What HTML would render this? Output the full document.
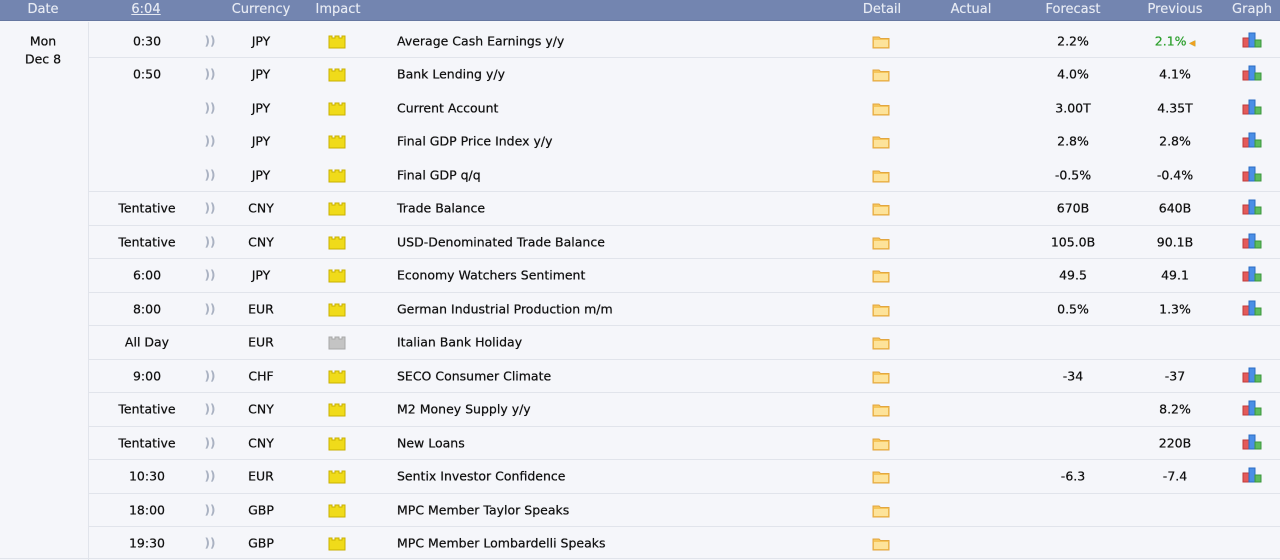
<!DOCTYPE html>
<html><head><meta charset="utf-8"><style>
*{margin:0;padding:0;box-sizing:border-box}
body{width:1280px;height:560px;overflow:hidden;background:#f5f6fa;font-family:"DejaVu Sans","Liberation Sans",sans-serif;font-size:12.5px;color:#111;position:relative}
.hdr{position:absolute;left:0;top:0;width:1280px;height:21px;background:#7385b0;border-bottom:1px solid #6677a0}
.h{position:absolute;top:2px;color:#e6eaf3;font-size:13px;transform:translateX(-50%);white-space:nowrap;text-shadow:0 0 0.4px #e6eaf3}
.vl{position:absolute;left:88px;top:22px;width:1px;height:538px;background:#e1e4eb}
.sep{position:absolute;left:89px;right:0;height:1px;background:#e1e4eb}
.t,.l{text-shadow:0 0 0.5px #111}
.t{position:absolute;transform:translate(-50%,-50%);white-space:nowrap}
.l{position:absolute;transform:translateY(-50%);white-space:nowrap}
.snd{position:absolute;color:#aab2c2;font-size:12px;font-weight:bold;transform:translate(-50%,-50%)}
</style></head><body>
<div class="hdr">
<span class="h" style="left:43px">Date</span>
<span class="h" style="left:146px;text-decoration:underline">6:04</span>
<span class="h" style="left:261px">Currency</span>
<span class="h" style="left:338px">Impact</span>
<span class="h" style="left:882px">Detail</span>
<span class="h" style="left:971px">Actual</span>
<span class="h" style="left:1073px">Forecast</span>
<span class="h" style="left:1175px">Previous</span>
<span class="h" style="left:1252px">Graph</span>
</div>
<div class="vl"></div>
<div class="t" style="left:43px;top:41px">Mon</div>
<div class="t" style="left:43px;top:59px">Dec 8</div>
<div class="sep" style="top:558px;left:0"></div>
<div id="rows"></div>
<script>
var R=[
["0:30","JPY",1,"Average Cash Earnings y/y","2.2%","2.1%",1,1],
["0:50","JPY",1,"Bank Lending y/y","4.0%","4.1%",0,0],
["","JPY",1,"Current Account","3.00T","4.35T",0,0],
["","JPY",1,"Final GDP Price Index y/y","2.8%","2.8%",0,0],
["","JPY",1,"Final GDP q/q","-0.5%","-0.4%",0,1],
["Tentative","CNY",1,"Trade Balance","670B","640B",0,1],
["Tentative","CNY",1,"USD-Denominated Trade Balance","105.0B","90.1B",0,1],
["6:00","JPY",1,"Economy Watchers Sentiment","49.5","49.1",0,1],
["8:00","EUR",1,"German Industrial Production m/m","0.5%","1.3%",0,1],
["All Day","EUR",0,"Italian Bank Holiday","","",0,1],
["9:00","CHF",1,"SECO Consumer Climate","-34","-37",0,1],
["Tentative","CNY",1,"M2 Money Supply y/y","","8.2%",0,1],
["Tentative","CNY",1,"New Loans","","220B",0,1],
["10:30","EUR",1,"Sentix Investor Confidence","-6.3","-7.4",0,1],
["18:00","GBP",1,"MPC Member Taylor Speaks","","",0,1],
["19:30","GBP",1,"MPC Member Lombardelli Speaks","","",0,0]];
var h="";
var folder='<svg width="18" height="14" viewBox="0 0 18 14"><path d="M1 2h6l1.5 1.5H17V13H1z" fill="#f6c65a" stroke="#e2a640"/><rect x="2" y="5" width="14" height="7" fill="#fde39a"/></svg>';
var graph='<svg width="20" height="16" viewBox="0 0 20 16"><rect x="1" y="6" width="6" height="9" fill="#e45a5a" stroke="#c03a3a"/><rect x="7" y="1" width="6" height="14" fill="#4a8ee6" stroke="#2b6cc4"/><rect x="13" y="8" width="6" height="7" fill="#5dbb5d" stroke="#3c963c"/></svg>';
function imp(c){var f=c?"#f0db1a":"#c4c4c4",s=c?"#c9b000":"#a8a8a8";return '<svg width="18" height="14" viewBox="0 0 18 14"><path d="M1 1h3v2h3V1h4v2h3V1h3v12H1z" fill="'+f+'" stroke="'+s+'"/></svg>';}
R.forEach(function(r,i){
var y=40.5+33.5*i;
h+='<div class="t" style="left:147px;top:'+y+'px">'+r[0]+'</div>';
if(r[0]!="All Day")h+='<div class="snd" style="left:210px;top:'+y+'px">))</div>';
h+='<div class="t" style="left:261px;top:'+y+'px">'+r[1]+'</div>';
h+='<div class="t" style="left:337px;top:'+(y+1)+'px;line-height:0;text-shadow:none">'+imp(r[2])+'</div>';
h+='<div class="l" style="left:397px;top:'+y+'px">'+r[3]+'</div>';
h+='<div class="t" style="left:881px;top:'+(y+1)+'px;line-height:0;text-shadow:none">'+folder+'</div>';
h+='<div class="t" style="left:1073px;top:'+y+'px">'+r[4]+'</div>';
if(r[6])h+='<div class="t" style="left:1175px;top:'+y+'px;color:#2a9e2a;text-shadow:0 0 0.5px #2a9e2a">2.1%<span style="color:#f0a020;font-size:8px"> ◀</span></div>';
else h+='<div class="t" style="left:1175px;top:'+y+'px">'+r[5]+'</div>';
if(r[5])h+='<div class="t" style="left:1252px;top:'+(y-1)+'px;line-height:0;text-shadow:none">'+graph+'</div>';
if(r[7])h+='<div class="sep" style="top:'+(y+16.5)+'px"></div>';
});
document.getElementById("rows").innerHTML=h;
</script>
</body></html>
